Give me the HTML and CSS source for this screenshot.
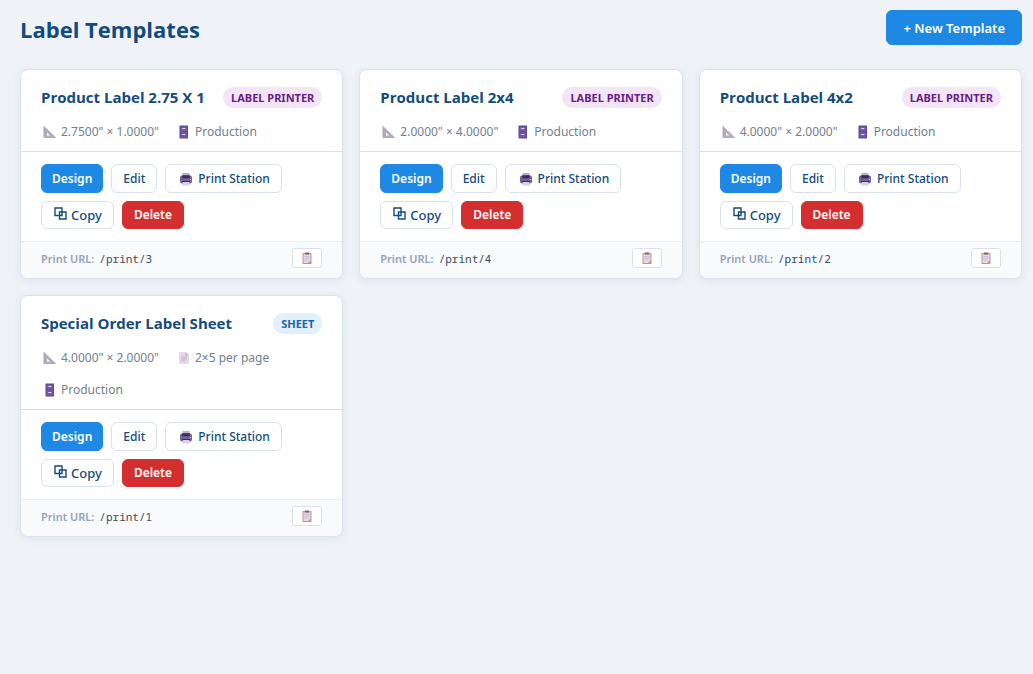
FILE: index.html
```html
<!DOCTYPE html>
<html lang="en">
  <head>
    <meta charset="UTF-8" />
    <meta name="viewport" content="width=device-width,initial-scale=1.0" />
    <title>Label Templates</title>
    <link rel="stylesheet" href="styles.css">
  </head>
  <body>
    <svg class="sprite" aria-hidden="true">
      <symbol id="i-ruler" viewBox="0 0 14 14">
        <path fill="#b4acbc" fill-rule="evenodd" d="M.5 .5 13.500 13H.5zM4 7.500v3h3.200z" />
        <path stroke="#9a92a4" stroke-width=".6" d="M.8 3.500h1M.8 5.500h1M.8 7.500h1M.8 9.500h1" />
      </symbol>
      <symbol id="i-cabinet" viewBox="0 0 14 14">
        <rect x="2.500" y=".5" width="8.500" height="13" rx=".6" fill="#5f4590" />
        <rect x="3.500" y="1.500" width="6.500" height="5" fill="#7459a8" />
        <rect x="3.500" y="7.500" width="6.500" height="5" fill="#7459a8" />
        <path stroke="#e3d9f2" stroke-width="1" d="M5.300 3.500h3M5.300 9.500h3" />
      </symbol>
      <symbol id="i-page" viewBox="0 0 14 14">
        <path fill="#e5d9ef" d="M2 1h6.500L12 4.500V13H2z" />
        <path fill="#bfaed2" d="M8.500 1 12 4.500H8.500z" />
        <path stroke="#b5a2cc" stroke-width=".8" d="M4.500 6h5.500M4.500 8h5.500M4.500 10h3.500" />
      </symbol>
      <symbol id="i-printer" viewBox="0 0 14 14">
        <path fill="#b9add0" d="M3.500 1h7v4h-7z" />
        <rect x="1" y="3.500" width="12" height="8" rx="2" fill="#75629b" />
        <path fill="#3c2f55" d="M3.200 3.200h7.600v3H3.200zM3 9h8v1.400H3z" />
        <path fill="#d9d0e8" d="M3.800 10h6.400l.6 3.500H3.200z" />
        <circle cx="11.500" cy="7.500" r=".6" fill="#d9d0e8" />
      </symbol>
      <symbol id="i-clipboard" viewBox="0 0 12 12">
        <rect x="1.500" y="1" width="9" height="11" rx=".6" fill="#c59583" />
        <path fill="#e2d9ec" d="M2.500 2.200h7v6.300L7.200 11H2.500z" />
        <path fill="#f3c4b4" d="M9.500 8.500 7.200 11V8.500z" />
        <path fill="#71657f" d="M4 .5h4v2H4z" />
        <path stroke="#b9abc9" stroke-width=".6" d="M3.500 4.500h5M3.500 6.200h5M3.500 8h3" />
      </symbol>
      <symbol id="i-copy" viewBox="0 0 13 13">
        <path fill="none" stroke="#134b7c" stroke-width="1.400" d="M1 1h7v7.500H1zM5.500 5H12v7H5.500z" />
      </symbol>
    </svg>

    <header class="page-header">
      <h1>Label Templates</h1>
      <a class="btn btn-primary btn-new" href="#new">+ New Template</a>
    </header>

    <main class="grid">
      <article class="card">
        <div class="card-header">
          <div class="card-title">
            <h2>Product Label 2.75 X 1</h2>
            <span class="badge badge-label">Label Printer</span>
          </div>
          <div class="meta">
            <span><svg><use href="#i-ruler" /></svg>2.7500" × 1.0000"</span>
            <span><svg><use href="#i-cabinet" /></svg>Production</span>
          </div>
        </div>
        <div class="actions">
          <a class="btn btn-primary" href="#design-3">Design</a>
          <a class="btn" href="#edit-3">Edit</a>
          <a class="btn btn-print" href="/print/3"><svg><use href="#i-printer" /></svg>Print Station</a>
          <button class="btn btn-copy" type="button"><svg><use href="#i-copy" /></svg>Copy</button>
          <button class="btn btn-danger" type="button">Delete</button>
        </div>
        <div class="card-footer">
          <span class="url-label">Print URL:</span>
          <code>/print/3</code>
          <button class="copy-url" type="button" aria-label="Copy URL"><svg><use href="#i-clipboard" /></svg></button>
        </div>
      </article>

      <article class="card">
        <div class="card-header">
          <div class="card-title">
            <h2>Product Label 2x4</h2>
            <span class="badge badge-label">Label Printer</span>
          </div>
          <div class="meta">
            <span><svg><use href="#i-ruler" /></svg>2.0000" × 4.0000"</span>
            <span><svg><use href="#i-cabinet" /></svg>Production</span>
          </div>
        </div>
        <div class="actions">
          <a class="btn btn-primary" href="#design-4">Design</a>
          <a class="btn" href="#edit-4">Edit</a>
          <a class="btn btn-print" href="/print/4"><svg><use href="#i-printer" /></svg>Print Station</a>
          <button class="btn btn-copy" type="button"><svg><use href="#i-copy" /></svg>Copy</button>
          <button class="btn btn-danger" type="button">Delete</button>
        </div>
        <div class="card-footer">
          <span class="url-label">Print URL:</span>
          <code>/print/4</code>
          <button class="copy-url" type="button" aria-label="Copy URL"><svg><use href="#i-clipboard" /></svg></button>
        </div>
      </article>

      <article class="card">
        <div class="card-header">
          <div class="card-title">
            <h2>Product Label 4x2</h2>
            <span class="badge badge-label">Label Printer</span>
          </div>
          <div class="meta">
            <span><svg><use href="#i-ruler" /></svg>4.0000" × 2.0000"</span>
            <span><svg><use href="#i-cabinet" /></svg>Production</span>
          </div>
        </div>
        <div class="actions">
          <a class="btn btn-primary" href="#design-2">Design</a>
          <a class="btn" href="#edit-2">Edit</a>
          <a class="btn btn-print" href="/print/2"><svg><use href="#i-printer" /></svg>Print Station</a>
          <button class="btn btn-copy" type="button"><svg><use href="#i-copy" /></svg>Copy</button>
          <button class="btn btn-danger" type="button">Delete</button>
        </div>
        <div class="card-footer">
          <span class="url-label">Print URL:</span>
          <code>/print/2</code>
          <button class="copy-url" type="button" aria-label="Copy URL"><svg><use href="#i-clipboard" /></svg></button>
        </div>
      </article>

      <article class="card">
        <div class="card-header">
          <div class="card-title">
            <h2>Special Order Label Sheet</h2>
            <span class="badge badge-sheet">Sheet</span>
          </div>
          <div class="meta">
            <span><svg><use href="#i-ruler" /></svg>4.0000" × 2.0000"</span>
            <span><svg><use href="#i-page" /></svg>2×5 per page</span>
            <span><svg><use href="#i-cabinet" /></svg>Production</span>
          </div>
        </div>
        <div class="actions">
          <a class="btn btn-primary" href="#design-1">Design</a>
          <a class="btn" href="#edit-1">Edit</a>
          <a class="btn btn-print" href="/print/1"><svg><use href="#i-printer" /></svg>Print Station</a>
          <button class="btn btn-copy" type="button"><svg><use href="#i-copy" /></svg>Copy</button>
          <button class="btn btn-danger" type="button">Delete</button>
        </div>
        <div class="card-footer">
          <span class="url-label">Print URL:</span>
          <code>/print/1</code>
          <button class="copy-url" type="button" aria-label="Copy URL"><svg><use href="#i-clipboard" /></svg></button>
        </div>
      </article>
    </main>
  </body>
</html>
```
FILE: styles.css
```css
* {
  box-sizing: border-box;
}
body {
  margin: 0;
  padding: 10px 11px 20px 20px;
  background: #eff3f8;
  color: #134b7c;
  font-family: "Segoe UI", "Noto Sans", sans-serif;
  font-size: 13px;
}
h1,
h2 {
  margin: 0;
  font-family: "Segoe UI", "Open Sans", sans-serif;
  font-weight: 700;
}
.sprite {
  display: none;
}
.page-header {
  display: flex;
  justify-content: space-between;
  align-items: flex-start;
  margin-bottom: 24px;
}
h1 {
  font-size: 22px;
  line-height: 35px;
  padding-top: 2px;
  height: 35px;
}
.grid {
  display: grid;
  grid-template-columns: repeat(auto-fill, minmax(320px, 1fr));
  gap: 16px;
}
.card {
  background: #fff;
  border: 1px solid #dde3eb;
  border-radius: 8px;
  box-shadow: 0 2px 8px rgba(20, 50, 90, 0.08);
  overflow: hidden;
}
.card-header {
  padding: 16px 20px 11px;
  border-bottom: 1px solid #d9dfe8;
}
.card-title {
  display: flex;
  justify-content: space-between;
  align-items: center;
  margin-bottom: 16px;
}
h2 {
  font-size: 15px;
  line-height: 22px;
  white-space: nowrap;
}
.badge {
  padding: 0 8px;
  border-radius: 11px;
  font-size: 11px;
  font-weight: 700;
  line-height: 21px;
  text-transform: uppercase;
  white-space: nowrap;
}
.badge-label {
  background: #f3e5f5;
  color: #6a1b8a;
}
.badge-sheet {
  background: #e1f0fc;
  color: #1565a8;
}
.meta {
  display: flex;
  flex-wrap: wrap;
  gap: 16px;
  color: #72808f;
  font-size: 12px;
  line-height: 16px;
}
.meta span {
  display: flex;
  align-items: center;
  gap: 4px;
}
.meta svg {
  width: 14px;
  height: 14px;
  margin-left: 2px;
}
.actions {
  display: flex;
  flex-wrap: wrap;
  gap: 8px;
  padding: 12px 20px;
}
.btn {
  display: inline-flex;
  align-items: center;
  padding: 1px 11px 0;
  border: 1px solid #dae1ea;
  border-radius: 6px;
  background: #fff;
  color: #134b7c;
  font-family: inherit;
  font-size: 12px;
  font-weight: 500;
  line-height: 26px;
  text-decoration: none;
  cursor: pointer;
}
.btn-primary {
  padding: 1px 10px 0;
  background: #1e88e5;
  border-color: #1e88e5;
  color: #fff;
  font-weight: 600;
}
.btn-new {
  padding: 1px 16px 0;
  font-size: 13px;
  line-height: 32px;
}
.btn-print svg {
  width: 14px;
  height: 14px;
  margin: 0 5px 0 2px;
}
.btn-copy,
.btn-danger {
  padding: 0 11px;
}
.btn-copy {
  font-size: 13px;
}
.btn-copy svg {
  width: 13px;
  height: 13px;
  margin: 0 4px 3px 1px;
}
.btn-danger {
  background: #d32f2f;
  border-color: #d32f2f;
  color: #fff;
  font-weight: 600;
}
.card-footer {
  display: flex;
  align-items: center;
  gap: 5px;
  padding: 6px 20px 10px;
  border-top: 1px solid #e9eef4;
  background: #f8fafc;
  font-size: 11px;
}
.url-label {
  color: #94a3b8;
  font-weight: 600;
}
code {
  color: #3d4c5e;
  font-family: Consolas, "Noto Sans Mono", "DejaVu Sans Mono", monospace;
  font-size: 11px;
}
.copy-url {
  display: flex;
  align-items: center;
  justify-content: center;
  width: 30px;
  height: 20px;
  margin-left: auto;
  padding: 0;
  border: 1px solid #d9e0e9;
  border-radius: 3px;
  background: #fff;
  cursor: pointer;
}
.copy-url svg {
  width: 12px;
  height: 12px;
}
```
